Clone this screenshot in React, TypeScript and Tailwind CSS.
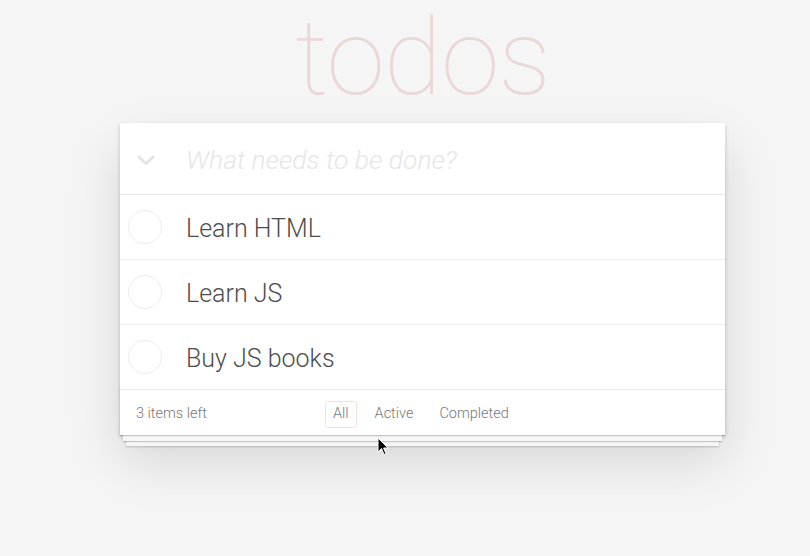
import React from "react";

const todos = ["Learn HTML", "Learn JS", "Buy JS books"];

export default function App() {
  return (
    <div className="min-h-[556px] w-full bg-[#f5f5f5] font-['Roboto',sans-serif] relative overflow-hidden">
      <div className="ml-[120px] w-[605px]">
        <h1 className="h-[123px] text-center text-[106px] leading-[116px] font-thin text-[rgba(175,47,47,0.15)] tracking-[-1px]">
          todos
        </h1>
        <div className="relative bg-white shadow-[0_2px_4px_0_rgba(0,0,0,0.2),0_25px_50px_0_rgba(0,0,0,0.13)]">
          <div className="h-[72px] pt-[3px] flex items-center border-b border-[#e6e6e6]">
            <div className="w-[66px] flex justify-start pl-[17px]">
              <svg width="18" height="11" viewBox="0 0 18 11">
                <path d="M2 2 L9 8.5 L16 2" fill="none" stroke="#e3e3e3" strokeWidth="3" strokeLinecap="round" strokeLinejoin="round" />
              </svg>
            </div>
            <div className="text-[26.5px] italic font-light text-[#e6e6e6]">What needs to be done?</div>
          </div>
          {todos.map((t) => (
            <div key={t} className="h-[65px] pt-[3px] flex items-center border-b border-[#ededed]">
              <div className="w-[66px] flex pl-[8px] -mt-[3px]">
                <div className="w-[34px] h-[34px] rounded-full border border-[#ededed]" />
              </div>
              <div className="text-[25px] font-light text-[#4d4d4d]">{t}</div>
            </div>
          ))}
          <div className="relative h-[45px] pt-[3px] flex items-center px-[16px] text-[14.5px] font-light text-[#777]">
            <div className="absolute left-0 right-0 bottom-0 h-[50px] shadow-[0_1px_1px_rgba(0,0,0,0.2),0_9px_0_-3px_#f6f6f6,0_10px_1px_-3px_rgba(0,0,0,0.2),0_17px_0_-6px_#f6f6f6,0_18px_2px_-6px_rgba(0,0,0,0.2)]" />
            <div className="relative w-[189px]">3 items left</div>
            <div className="relative flex items-center gap-[10px]">
              <span className="px-[7px] h-[27px] flex items-center border border-[rgba(175,47,47,0.15)] rounded-[3px]">All</span>
              <span className="px-[7px] h-[27px] flex items-center border border-transparent rounded-[3px]">Active</span>
              <span className="px-[7px] h-[27px] flex items-center border border-transparent rounded-[3px]">Completed</span>
            </div>
          </div>
        </div>
      </div>
      <svg className="absolute left-[377px] top-[437px]" width="12" height="19" viewBox="0 0 12 19">
        <path d="M1 1 L1 15 L4.5 11.5 L7 17.5 L9 16.6 L6.6 11 L11 11 Z" fill="#000" stroke="#fff" strokeWidth="1" strokeLinejoin="round" />
      </svg>
    </div>
  );
}
